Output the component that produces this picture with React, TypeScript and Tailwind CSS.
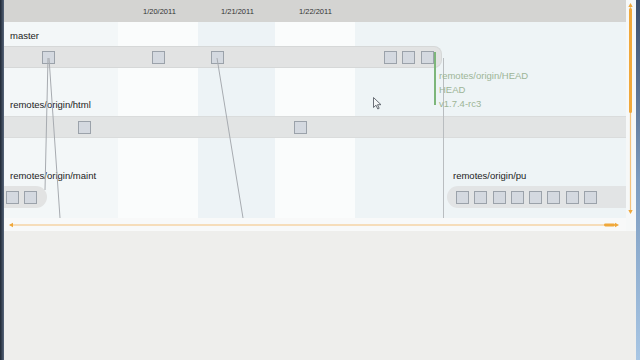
import React from 'react';

const font = { fontFamily: '"Liberation Sans", Arial, sans-serif' };

function Commit() {
  return <div className="w-[13px] h-[13px] shrink-0 border border-[#9ba2aa] bg-[#d4d9e0]" />;
}

function PlacedCommit({ left }: { left: number }) {
  return (
    <div className="absolute top-[4px]" style={{ left }}>
      <Commit />
    </div>
  );
}

export default function App() {
  return (
    <div className="w-[640px] h-[360px] flex bg-[#eeeeec] overflow-hidden text-[#222]" style={font}>
      {/* window edge */}
      <div className="w-[4px] h-full bg-gradient-to-r from-[#1f2835] to-[#56657a]" />

      <div className="w-[622px] flex flex-col">
        {/* date header */}
        <div className="relative h-[22px] bg-[#d4d4d2] text-[7.5px] text-[#333]">
          <span className="absolute top-[6px] left-[139px]">1/20/2011</span>
          <span className="absolute top-[6px] left-[217px]">1/21/2011</span>
          <span className="absolute top-[6px] left-[295px]">1/22/2011</span>
        </div>

        {/* branches */}
        <div className="relative h-[196px] text-[9.5px]">
          <div className="absolute inset-0 flex">
            <div className="w-[114px] bg-[#f3f7f8]" />
            <div className="w-[80px] bg-[#fafcfc]" />
            <div className="w-[77px] bg-[#edf3f6]" />
            <div className="w-[80px] bg-[#fafcfc]" />
            <div className="flex-1 bg-[#eef4f6]" />
          </div>

          <div className="relative flex flex-col">
            <div className="h-[24px] pt-[8px] pl-[6px] leading-[12px]">master</div>
            <div className="relative h-[22px] w-[438px] bg-[#e2e3e3] border-y border-r border-[#d6d8d8] rounded-r-[8px]">
              <PlacedCommit left={38} />
              <PlacedCommit left={148} />
              <PlacedCommit left={207} />
              <PlacedCommit left={380} />
              <PlacedCommit left={398} />
              <PlacedCommit left={417} />
            </div>

            <div className="h-[48px] pt-[31px] pl-[6px] leading-[12px]">remotes/origin/html</div>
            <div className="relative h-[22px] bg-[#e2e4e4] border-y border-[#dadcdc]">
              <PlacedCommit left={74} />
              <PlacedCommit left={290} />
            </div>

            <div className="h-[48px] flex pt-[32px] leading-[12px]">
              <div className="w-[443px] pl-[6px]">remotes/origin/maint</div>
              <div className="pl-[6px]">remotes/origin/pu</div>
            </div>
            <div className="h-[22px] flex justify-between">
              <div className="w-[43px] flex items-center gap-[5px] pl-[2px] bg-[#e2e3e3] rounded-r-full">
                <Commit />
                <Commit />
              </div>
              <div className="w-[179px] flex items-center gap-[5.25px] pl-[9px] bg-[#e2e4e5] rounded-l-full">
                {Array.from({ length: 8 }).map((_, i) => (
                  <Commit key={i} />
                ))}
              </div>
            </div>
          </div>

          {/* ancestry lines */}
          <svg className="absolute inset-0 pointer-events-none" width="622" height="196">
            <g stroke="#a7abb0" strokeWidth="1" fill="none">
              <line x1="44" y1="36" x2="41" y2="168" />
              <line x1="45" y1="36" x2="56" y2="196" />
              <line x1="213" y1="36" x2="239" y2="196" />
              <line x1="439.5" y1="36" x2="439.5" y2="196" stroke="#b9bdc0" />
            </g>
            <line x1="431" y1="30" x2="431" y2="83" stroke="#7db67a" strokeWidth="2" />
          </svg>

          <div className="absolute left-[435px] top-[47px] flex flex-col leading-[14px] text-[#9db596]">
            <span>remotes/origin/HEAD</span>
            <span>HEAD</span>
            <span>v1.7.4-rc3</span>
          </div>

          {/* mouse pointer */}
          <svg className="absolute left-[369px] top-[75px]" width="9" height="13" viewBox="0 0 9 13">
            <path d="M0.5 0.5 L0.5 10.5 L3 8.2 L4.8 12 L6.2 11.3 L4.5 7.7 L8 7.7 Z" fill="#f4f6f7" stroke="#5a6068" strokeWidth="0.9" />
          </svg>
        </div>

        {/* horizontal scrollbar */}
        <div className="h-[13px] bg-[#f8f9f9]">
          <svg width="622" height="13">
            <line x1="6" y1="7" x2="612" y2="7" stroke="#f4c27c" strokeWidth="1.2" />
            <path d="M5 7 L9 4.8 L9 9.2 Z" fill="#f0a83a" />
            <path d="M615 7 L611 4.8 L611 9.2 Z" fill="#f0a83a" />
            <rect x="600" y="5.6" width="11" height="2.8" rx="1.4" fill="#f0a83a" />
          </svg>
        </div>
        <div className="flex-1" />
      </div>

      {/* vertical scrollbar */}
      <div className="w-[10px] flex flex-col">
        <div className="h-[231px] bg-[#f6f8f8]">
          <svg width="10" height="231">
            <line x1="4.5" y1="5" x2="4.5" y2="212" stroke="#f4c27c" strokeWidth="1.2" />
            <path d="M4.5 3 L2.3 7 L6.7 7 Z" fill="#f0a83a" />
            <path d="M4.5 214 L2.3 210 L6.7 210 Z" fill="#f0a83a" />
            <rect x="3" y="8" width="3" height="105" rx="1.5" fill="#f0a83a" />
          </svg>
        </div>
      </div>

      {/* window edge */}
      <div className="w-[4px] h-full bg-gradient-to-b from-[#3b4e6c] via-[#7d9cc0] to-[#a8c6e4]" />
    </div>
  );
}
